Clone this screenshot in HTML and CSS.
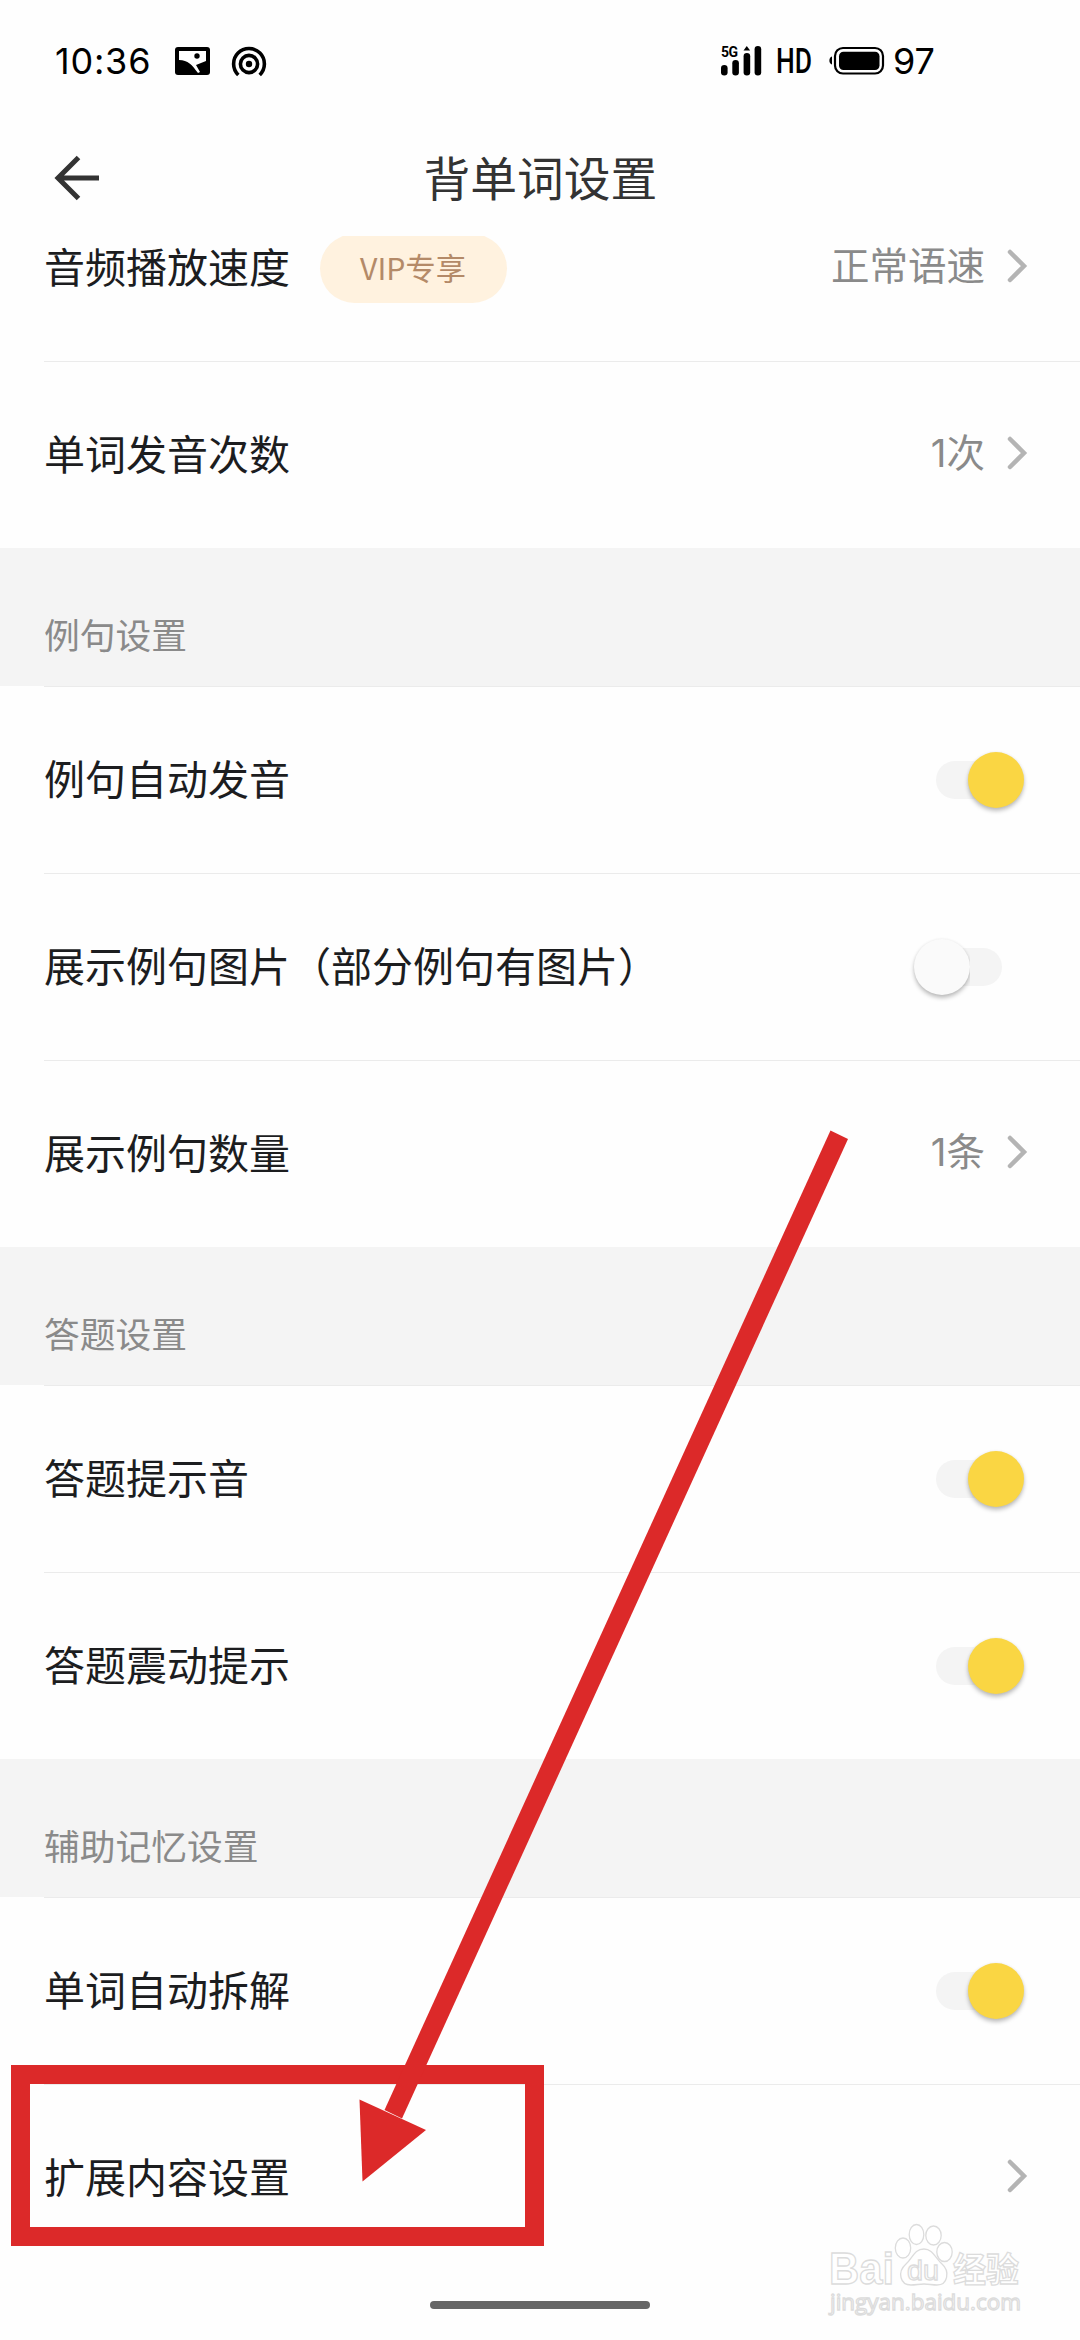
FILE: index.html
```
<!DOCTYPE html>
<html lang="zh-CN">
<head>
    <meta charset="UTF-8">
    <meta name="viewport" content="width=device-width, initial-scale=1.0">
    <title>背单词设置</title>
    <link rel="stylesheet" href="styles.css">
</head>
<body>
    <div class="screen">
        <div class="status-bar">
            <span class="status-time">10:36</span>
            <svg class="icon-picture" width="35" height="28" viewBox="0 0 35 28">
                <rect width="35" height="28" rx="3" fill="#000"/>
                <path d="M4 4h27v10l-10 4 4 7-2 1C17 18 13 13 4 13z" fill="#fff"/>
                <circle cx="22" cy="9" r="2.7" fill="#000"/>
            </svg>
            <svg class="icon-hotspot" width="36" height="31" viewBox="0 0 36 31" fill="none" stroke="#000" stroke-width="3.6">
                <path d="M7.3 29A15.4 15.4 0 1 1 28.7 29"/>
                <circle cx="18" cy="18" r="8.6"/>
                <circle cx="18" cy="18" r="3.2" fill="#000" stroke="none"/>
            </svg>
            <svg class="icon-signal" width="41" height="30" viewBox="0 0 41 30">
                <text class="signal-type" x="0" y="11" textLength="17">5G</text>
                <rect x="0" y="19" width="6.6" height="10.5" rx="3.3"/>
                <rect x="11.3" y="14" width="6.6" height="15.5" rx="3.3"/>
                <rect x="22.6" y="7" width="6.6" height="22.5" rx="3.3"/>
                <rect x="33.6" y="0" width="6.6" height="29.5" rx="3.3"/>
                <path d="M22.5 4.5l3.3-4.5 3.3 4.5z"/>
            </svg>
            <svg class="icon-hd" width="34" height="28" viewBox="0 0 34 28">
                <text class="hd-text" x="-1" y="26" textLength="36" lengthAdjust="spacingAndGlyphs">HD</text>
            </svg>
            <svg class="icon-battery" width="56" height="28" viewBox="0 0 56 28">
                <path d="M3 9.5v8C-.5 17 -.5 10 3 9.5z"/>
                <rect x="6" y="1" width="48" height="25.5" rx="8" fill="none" stroke="#000" stroke-width="2.2"/>
                <rect x="10" y="4.8" width="40.5" height="18.2" rx="4.5"/>
            </svg>
            <span class="status-level">97</span>
        </div>

        <header class="title-bar">
            <svg class="icon-back" width="46" height="46" viewBox="0 0 46 46" fill="none" stroke="#333" stroke-width="5">
                <path d="M24.5 2.5L4 23l20.5 20.5M5 23h40"/>
            </svg>
            <h1>背单词设置</h1>
        </header>

        <main class="settings">
            <div class="row row-first">
                <span class="label">音频播放速度</span>
                <span class="vip-tag">VIP专享</span>
                <span class="value">正常语速</span>
                <svg class="chevron" viewBox="0 0 20 34"><path d="M3 3l14 14L3 31"/></svg>
            </div>
            <div class="row">
                <span class="label">单词发音次数</span>
                <span class="value">1次</span>
                <svg class="chevron" viewBox="0 0 20 34"><path d="M3 3l14 14L3 31"/></svg>
            </div>

            <h2 class="section-title">例句设置</h2>
            <div class="row">
                <span class="label">例句自动发音</span>
                <span class="switch switch-on"></span>
            </div>
            <div class="row">
                <span class="label">展示例句图片（部分例句有图片）</span>
                <span class="switch"></span>
            </div>
            <div class="row">
                <span class="label">展示例句数量</span>
                <span class="value">1条</span>
                <svg class="chevron" viewBox="0 0 20 34"><path d="M3 3l14 14L3 31"/></svg>
            </div>

            <h2 class="section-title">答题设置</h2>
            <div class="row">
                <span class="label">答题提示音</span>
                <span class="switch switch-on"></span>
            </div>
            <div class="row">
                <span class="label">答题震动提示</span>
                <span class="switch switch-on"></span>
            </div>

            <h2 class="section-title">辅助记忆设置</h2>
            <div class="row">
                <span class="label">单词自动拆解</span>
                <span class="switch switch-on"></span>
            </div>
            <div class="row">
                <span class="label">扩展内容设置</span>
                <svg class="chevron" viewBox="0 0 20 34"><path d="M3 3l14 14L3 31"/></svg>
            </div>
        </main>

        <div class="home-bar"></div>

        <!-- watermark -->
        <svg class="watermark" width="200" height="100" viewBox="0 0 200 100">
            <text class="wm-logo" x="2" y="60" textLength="65" lengthAdjust="spacingAndGlyphs">Bai</text>
            <ellipse cx="76" cy="24" rx="7.7" ry="10"/>
            <ellipse cx="89.5" cy="10.5" rx="7.3" ry="10"/>
            <ellipse cx="106.5" cy="11.5" rx="7.7" ry="9.5"/>
            <ellipse cx="117.5" cy="28" rx="7.7" ry="9.5"/>
            <path d="M97 25c-10 0-11 9-18 15-9 8-6 21 5 21 5 0 8-1 13-1s8 1 13 1c11 0 13-14 5-21-7-6-9-15-18-15z"/>
            <text class="wm-du" x="80" y="56" textLength="32" lengthAdjust="spacingAndGlyphs">du</text>
            <text class="wm-cn" x="126" y="58" textLength="66" lengthAdjust="spacingAndGlyphs">经验</text>
            <text class="wm-url" x="3" y="86" textLength="191" lengthAdjust="spacingAndGlyphs">jingyan.baidu.com</text>
        </svg>

        <!-- annotation: frame and arrow on the last row -->
        <svg class="annotation" width="1080" height="2340" viewBox="0 0 1080 2340">
            <path fill-rule="evenodd" d="M11 2065H544V2246H11zM30 2084V2227H525V2084z"/>
            <path d="M830.5 1130.5L848 1139 402 2118.5 384.5 2110z"/>
            <path d="M359.5 2099.5L426 2130 362.5 2181.5z"/>
        </svg>
    </div>
</body>
</html>
```

FILE: styles.css
```
* {
    margin: 0;
    padding: 0;
    box-sizing: border-box;
}

body {
    font-family: "Noto Sans CJK SC", "Noto Sans", sans-serif;
    background: #fefefe;
    color: #1c1d1f;
}

svg {
    overflow: visible;
}

.screen {
    position: relative;
    width: 1080px;
    height: 2340px;
    display: flex;
    flex-direction: column;
    overflow: hidden;
}

/* status bar */
.status-bar {
    height: 120px;
    padding: 2px 145px 0 55px;
    display: flex;
    align-items: center;
    color: #000;
    font-family: Inter, Roboto, sans-serif;
    font-size: 36px;
    line-height: 1;
}

.status-time {
    width: 120px;
    letter-spacing: 0.8px;
}

.icon-hotspot {
    margin-left: 21px;
}

.icon-signal {
    margin-left: auto;
}

.signal-type {
    font: 700 14px Roboto, sans-serif;
}

.icon-hd {
    margin-left: 15px;
}

.hd-text {
    font: 500 35px Roboto, sans-serif;
}

.icon-battery {
    margin-left: 18px;
}

.status-level {
    margin-left: 8px;
}

/* title bar */
.title-bar {
    height: 116px;
    padding: 0 53px 0 54px;
    display: grid;
    grid-template-columns: 46px 1fr 46px;
    align-items: center;
}

.title-bar h1 {
    padding-bottom: 5px;
    font-size: 46.75px;
    font-weight: 400;
    line-height: 68px;
    text-align: center;
    color: #333;
}

/* settings list */
.settings {
    height: 2035px;
    overflow: hidden;
}

.row {
    height: 187px;
    margin-left: 44px;
    padding-right: 53px;
    display: flex;
    align-items: center;
    border-top: 1px solid #ebebeb;
}

.row-first {
    margin-top: -62px;
}

.label {
    padding-bottom: 6px;
    font-size: 41px;
    line-height: 60px;
}

.vip-tag {
    height: 69px;
    margin-left: 30px;
    padding: 0 41px 0 40px;
    border-radius: 35px;
    background: #fff2df;
    color: #b48a68;
    font-size: 30.25px;
    line-height: 66px;
}

.value {
    margin-left: auto;
    padding-bottom: 4px;
    color: #8a8a8a;
    font-family: Inter, "Noto Sans CJK SC", sans-serif;
    font-size: 38.5px;
    line-height: 56px;
}

.chevron {
    width: 20px;
    height: 34px;
    margin: 0 0 4px 22px;
    fill: none;
    stroke: #b4b4b4;
    stroke-width: 4.5;
    stroke-linecap: round;
}

.label + .chevron {
    margin-left: auto;
}

.section-title {
    height: 138px;
    padding: 60px 44px 0;
    background: #f4f4f4;
    color: #8a8a8a;
    font-size: 35.75px;
    font-weight: 400;
    line-height: 52px;
}

/* switches */
.switch {
    width: 110px;
    height: 56px;
    margin-left: auto;
    margin-right: 3px;
    display: flex;
    align-items: center;
    background: linear-gradient(#f4f4f4, #f4f4f4) center / 30px 38px no-repeat;
}

.switch::before {
    content: "";
    width: 56px;
    height: 56px;
    border-radius: 50%;
    background: #fafafa;
    box-shadow: 0 3px 4px rgba(0, 0, 0, 0.25), 0 0 3px rgba(0, 0, 0, 0.06);
}

.switch::after {
    content: "";
    width: 32px;
    height: 38px;
    border-radius: 0 19px 19px 0;
    background: #f4f4f4;
}

.switch-on {
    flex-direction: row-reverse;
}

.switch-on::before {
    background: #fad643;
}

.switch-on::after {
    border-radius: 19px 0 0 19px;
}

.home-bar {
    width: 220px;
    height: 8px;
    margin: 30px auto 0;
    border-radius: 4px;
    background: #666;
}

.watermark {
    position: absolute;
    left: 827px;
    top: 2224px;
    fill: #fff;
    stroke: #dcdcdc;
    stroke-width: 1.3;
}

.wm-logo {
    font: 700 44px "Liberation Sans", sans-serif;
}

.wm-du {
    font: 400 28px "Liberation Sans", sans-serif;
}

.wm-cn {
    font: 700 34px "Noto Sans CJK SC", sans-serif;
}

.wm-url {
    font: 400 22px "Open Sans", sans-serif;
}

.annotation {
    position: absolute;
    left: 0;
    top: 0;
    fill: #dc2929;
}
```
